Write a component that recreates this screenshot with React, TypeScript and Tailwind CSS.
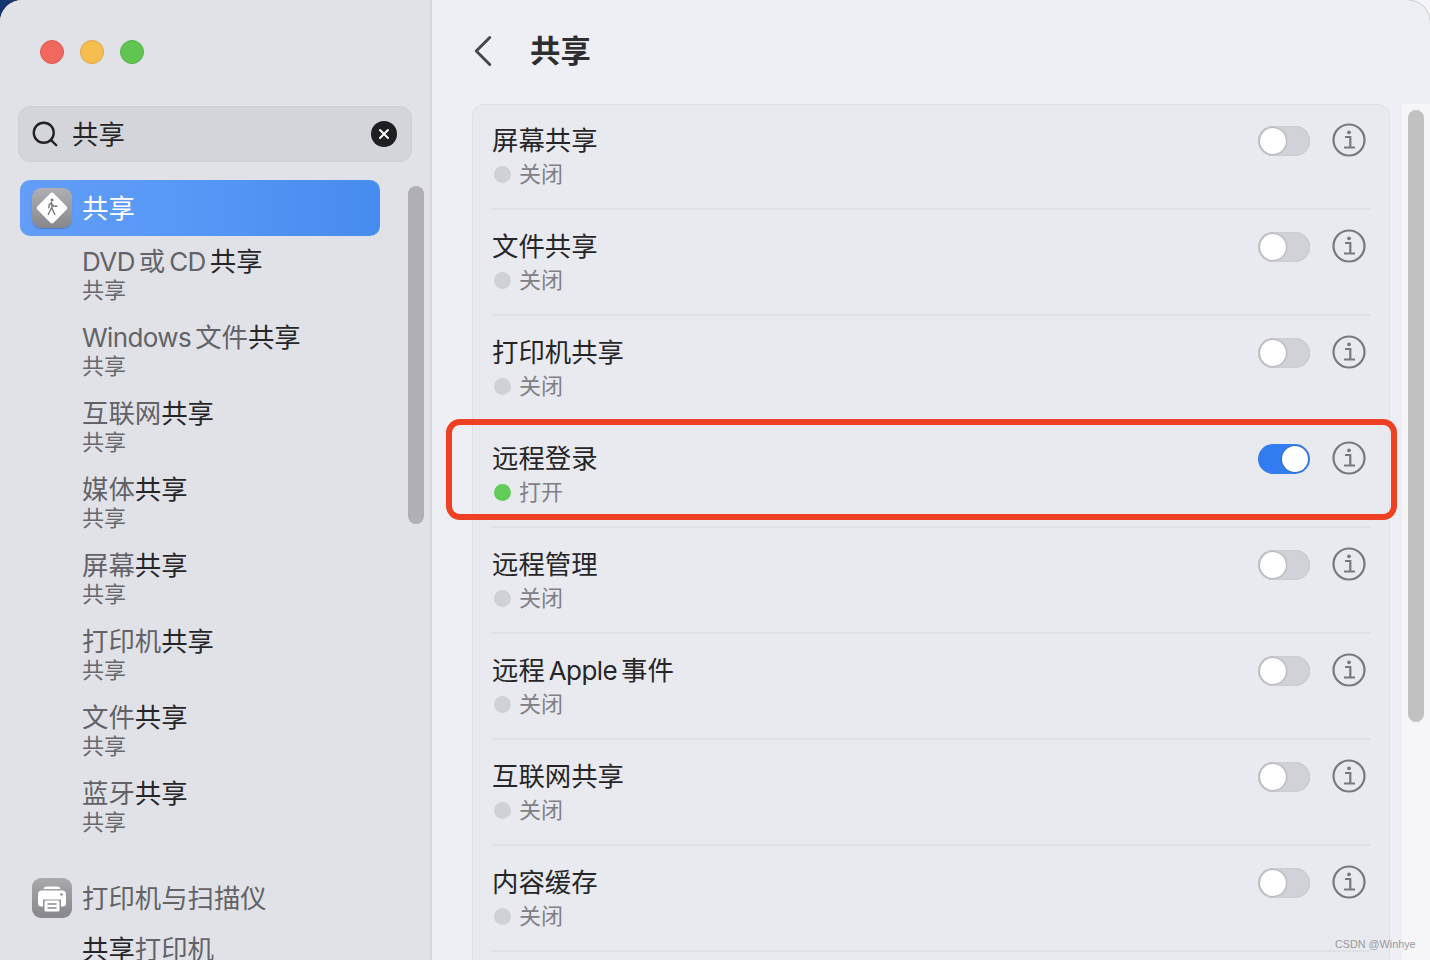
import { ChevronLeft, Search, X } from "lucide-react";

const font = { fontFamily: '"Inter", "Noto Sans CJK SC", sans-serif' };

const sidebarItems = ["DVD或CD", "Windows文件", "互联网", "媒体", "屏幕", "打印机", "文件", "蓝牙"];

const services = [
  { title: "屏幕共享", on: false },
  { title: "文件共享", on: false },
  { title: "打印机共享", on: false },
  { title: "远程登录", on: true },
  { title: "远程管理", on: false },
  { title: "远程Apple事件", on: false },
  { title: "互联网共享", on: false },
  { title: "内容缓存", on: false },
];

// latin words sit tighter against the CJK than a normal space
function MixedText({ text }: { text: string }) {
  const parts = text.split(/([A-Za-z]+)/);
  return (
    <>
      {parts.map((part, i) =>
        /[A-Za-z]/.test(part) ? (
          <span
            key={i}
            className={
              i === 1 && parts[0] === ""
                ? "mr-[4px] text-[26px] tracking-[-0.6px]"
                : "mx-[4px] text-[26px] tracking-[-0.6px]"
            }
          >
            {part}
          </span>
        ) : (
          part
        )
      )}
    </>
  );
}

function InfoIcon() {
  return (
    <svg width="34" height="34" viewBox="0 0 34 34" fill="none" stroke="#77787a" strokeWidth="2.2">
      <circle cx="17" cy="17" r="15.5" />
      <circle cx="17" cy="9.3" r="1.9" fill="#77787a" stroke="none" />
      <path d="M13 14h5.3v10.5M12 24.5h11" />
    </svg>
  );
}

function Toggle({ on }: { on: boolean }) {
  return (
    <div
      className={
        on
          ? "mt-[3px] flex h-[30px] w-[52px] items-center justify-end rounded-full bg-gradient-to-r from-[#2f7bf2] to-[#3a80ee] pr-[2px]"
          : "mt-[3px] flex h-[30px] w-[52px] items-center justify-start rounded-full bg-[#d1d2d8] pl-[2px] shadow-[inset_0_0_1px_rgba(0,0,0,0.25)]"
      }
    >
      <div className="h-[26px] w-[26px] rounded-full bg-white shadow-[0_0_2px_rgba(0,0,0,0.45)]" />
    </div>
  );
}

function ServiceRow({ title, on }: { title: string; on: boolean }) {
  return (
    <div className="mb-[1px] px-[19px]">
      <div className="flex h-[105px] items-start justify-between border-b-2 border-[#dfe0e6] pt-[20px]">
        <div>
          <div className="-mt-[1px] h-[33px] text-[26.4px] leading-[32px] text-[#262628]">
            <MixedText text={title} />
          </div>
          <div className="mt-[4px] flex h-[26px] items-center">
            <span className={on ? "ml-[2px] h-[17px] w-[17px] rounded-full bg-[#62cc58]" : "ml-[2px] h-[17px] w-[17px] rounded-full bg-[#d0d1d6]"} />
            <span className="ml-[8px] text-[22px] leading-[26px] text-[#808084]">{on ? "打开" : "关闭"}</span>
          </div>
        </div>
        <div className="-mt-[2px] flex items-start gap-[22px] pr-[4px]">
          <Toggle on={on} />
          <InfoIcon />
        </div>
      </div>
    </div>
  );
}

function ShareIcon() {
  return (
    <div className="flex h-[40px] w-[40px] items-center justify-center rounded-[9px] bg-gradient-to-b from-[#b0b0b4] to-[#88888c] shadow-[0_1px_1px_rgba(0,0,0,0.2)]">
      <svg width="34" height="34" viewBox="0 0 34 34">
        <rect x="5.500" y="5.500" width="23" height="23" rx="2.500" fill="#fff" transform="rotate(45 17 17)" />
        <circle cx="17" cy="9" r="1.500" fill="#77777b" />
        <path d="M16.500 11.500l-2.300 2.300-.4 3M16.500 11.500l.6 6M17.100 17.500l2.700 6M16.600 16.800l-3.400 6.700M17 13.500l2 1.800h3" fill="none" stroke="#77777b" strokeWidth="1.400" strokeLinecap="round" strokeLinejoin="round" />
      </svg>
    </div>
  );
}

function PrinterIcon() {
  return (
    <div className="flex h-[40px] w-[40px] items-center justify-center rounded-[9px] bg-gradient-to-b from-[#a9a9ad] to-[#87878b]">
      <svg width="36" height="36" viewBox="0 0 36 36">
        <path d="M9.500 9a3 3 0 0 1 3-2.500h11a3 3 0 0 1 3 2.500h-17z" fill="#fff" />
        <path d="M8 10.500h20a4 4 0 0 1 4 4v9a3 3 0 0 1-3 3h-2v-7H9v7H7a3 3 0 0 1-3-3v-9a4 4 0 0 1 4-4z" fill="#fff" />
        <circle cx="27.500" cy="14.500" r="1.300" fill="#8b8b8f" />
        <rect x="10.500" y="20.500" width="15" height="11" rx="1.500" fill="#fff" />
        <path d="M13.500 24h9M13.500 28h9" stroke="#8b8b8f" strokeWidth="1.400" />
      </svg>
    </div>
  );
}

function Sidebar() {
  return (
    <aside className="relative h-full w-[432px] shrink-0 overflow-hidden border-r-2 border-[#d5d6db] bg-[#e1e2e8]">
      <div className="flex gap-[16px] pt-[40px] pl-[40px]">
        <span className="h-[24px] w-[24px] rounded-full border border-[#dd5a50] bg-[#f0685e]" />
        <span className="h-[24px] w-[24px] rounded-full border border-[#dfa840] bg-[#f6bd4f]" />
        <span className="h-[24px] w-[24px] rounded-full border border-[#51b546] bg-[#61c554]" />
      </div>

      <div className="mt-[42px] ml-[18px] flex h-[56px] w-[394px] items-center rounded-[12px] border border-[#cfd0d5] bg-[#d4d5da] pr-[14px] pl-[11px]">
        <Search size={30} strokeWidth={1.9} color="#222" />
        <span className="ml-[12px] flex-1 pt-[2px] text-[26.4px] text-[#262628]">共享</span>
        <span className="flex h-[26px] w-[26px] items-center justify-center rounded-full bg-[#1f1f21]">
          <X size={16} strokeWidth={3} color="#fff" />
        </span>
      </div>

      <div className="mt-[18px] ml-[20px] flex h-[56px] w-[360px] items-center rounded-[10px] bg-gradient-to-r from-[#629df8] via-[#5697f6] to-[#478bee] pl-[12px]">
        <ShareIcon />
        <span className="ml-[10px] pt-[2px] text-[26.4px] text-white">共享</span>
      </div>

      <div className="mt-[9px] flex flex-col gap-[18px] pl-[82px]">
        {sidebarItems.map((item) => (
          <div key={item}>
            <div className="h-[32px] text-[26.4px] leading-[32px] whitespace-nowrap text-[#636367]">
              <MixedText text={item} />
              <span className="text-[#262628]">共享</span>
            </div>
            <div className="h-[26px] text-[22px] leading-[26px] text-[#68686c]">共享</div>
          </div>
        ))}
      </div>

      <div className="mt-[43px] ml-[32px] flex h-[40px] items-center">
        <PrinterIcon />
        <span className="ml-[10px] pt-[2px] text-[26.4px] text-[#636367]">打印机与扫描仪</span>
      </div>
      <div className="mt-[15px] pl-[82px] text-[26.4px] leading-[32px] text-[#636367]">
        <span className="text-[#262628]">共享</span>打印机
      </div>

      <div className="absolute top-[186px] left-[408px] h-[338px] w-[16px] rounded-full bg-[#b0b0b4]" />
    </aside>
  );
}

export default function App() {
  return (
    <div className="relative h-[960px] w-[1430px] overflow-hidden bg-gradient-to-r from-[#12346f] via-[#f2f2f4] to-[#f6f6f8]" style={font}>
      <div className="flex h-full w-full overflow-hidden rounded-t-[22px] bg-[#eeeff4] shadow-[0_0_1px_rgba(0,0,0,0.6)]">
        <Sidebar />
        <main className="min-w-0 flex-1">
          <header className="flex h-[104px] items-center pb-[2px] pl-[24px]">
            <ChevronLeft size={54} strokeWidth={1.3} color="#47474a" />
            <h1 className="ml-[20px] pt-[2px] text-[30.4px] font-semibold text-[#2e2e30]">共享</h1>
          </header>
          <div className="flex items-start">
            <div className="ml-[40px] h-[900px] w-[918px] rounded-t-[12px] border-x border-t border-[#dfe0e6] bg-[#e9eaf0]">
              {services.map((s) => (
                <ServiceRow key={s.title} title={s.title} on={s.on} />
              ))}
            </div>
            <div className="ml-[12px] h-[900px] w-[28px] bg-[#f6f6f8] pt-[6px] pl-[6px]">
              <div className="h-[612px] w-[16px] rounded-full bg-[#c1c1c1]" />
            </div>
          </div>
        </main>
      </div>

      <div className="absolute top-[419px] left-[446px] h-[101px] w-[951px] rounded-[14px] border-[6px] border-[#ef4023]" />
      <div className="absolute top-[937px] left-[1335px] text-[10.8px] leading-[14px] text-[#99999c]" style={{ fontFamily: '"Liberation Sans", sans-serif' }}>
        CSDN @Winhye
      </div>
    </div>
  );
}
